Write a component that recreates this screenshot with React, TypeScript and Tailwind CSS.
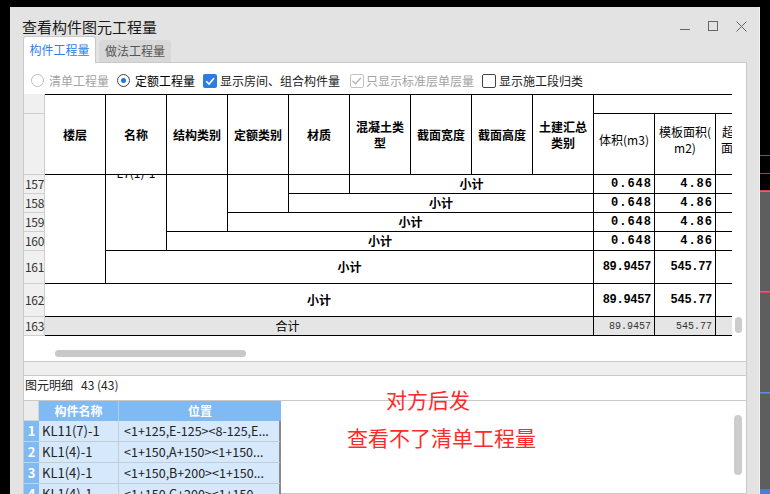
import React from "react";

const ui = "font-['Noto_Sans_CJK_SC','Microsoft_YaHei',sans-serif]";
const mono = "font-['Liberation_Mono',monospace]";

const rowHead = "bg-[#f0f0f0] border-r border-b border-[#cfcfcf] flex items-center pl-[1px] text-[12px] tracking-[-0.3px] text-[#333] whitespace-nowrap";
const cell = "border-r border-b border-black";
const head = "row-span-2 border-t border-r border-b border-black flex items-center justify-center text-center font-bold leading-[16px] px-[4px]";
const sub = "border-r border-b border-black flex items-center justify-center text-center leading-[16px] pb-[8px]";
const numBase = `border-r border-b border-black flex items-center justify-end ${mono} font-bold text-[12px]`;

const subtotals = [
  { n: "157", span: "col-span-4", v: "0.648", a: "4.86", fit: "tracking-[1px] pr-[2px]" },
  { n: "158", span: "col-span-5", v: "0.648", a: "4.86", fit: "tracking-[1px] pr-[2px]" },
  { n: "159", span: "col-span-6", v: "0.648", a: "4.86", fit: "tracking-[1px] pr-[2px]" },
  { n: "160", span: "col-span-7", v: "0.648", a: "4.86", fit: "tracking-[1px] pr-[2px]" },
  { n: "161", span: "col-span-8", v: "89.9457", a: "545.77", fit: "tracking-[-0.3px] pr-[3px]" },
  { n: "162", span: "col-span-9", v: "89.9457", a: "545.77", fit: "tracking-[-0.3px] pr-[3px]" },
];

const details = [
  { id: "1", name: "KL11(7)-1", pos: "<1+125,E-125><8-125,E..." },
  { id: "2", name: "KL1(4)-1", pos: "<1+150,A+150><1+150..." },
  { id: "3", name: "KL1(4)-1", pos: "<1+150,B+200><1+150..." },
  { id: "4", name: "KL1(4)-1", pos: "<1+150,C+200><1+150..." },
];

function Radio({ on, dim }: { on?: boolean; dim?: boolean }) {
  return (
    <span className={`w-[13px] h-[13px] shrink-0 rounded-full border bg-white flex items-center justify-center ${dim ? "border-[#bdbdbd]" : "border-[#444]"}`}>
      {on && <span className="w-[5px] h-[5px] rounded-full bg-[#1f78e0]" />}
    </span>
  );
}

function Check({ on, dim }: { on?: boolean; dim?: boolean }) {
  if (on && !dim) {
    return (
      <span className="w-[14px] h-[14px] shrink-0 rounded-[2px] bg-[#2b7de1] flex items-center justify-center">
        <svg width="12" height="12" viewBox="0 0 12 12">
          <path d="M2.2 6.2 L5 9 L10 3.2" fill="none" stroke="white" strokeWidth="1.6" />
        </svg>
      </span>
    );
  }
  return (
    <span className={`w-[14px] h-[14px] shrink-0 rounded-[2px] border bg-white flex items-center justify-center ${dim ? "border-[#c2c2c2]" : "border-[#444]"}`}>
      {on && (
        <svg width="12" height="12" viewBox="0 0 12 12">
          <path d="M1.5 5.8 L4.5 8.8 L10 2.8" fill="none" stroke="#b5b5b5" strokeWidth="1.4" />
        </svg>
      )}
    </span>
  );
}

function SideStrip() {
  return (
    <div className="w-[10px] shrink-0 flex flex-col bg-black">
      <div className="h-[148px]" />
      <div className="h-px bg-[#2f7d32]" />
      <div className="h-[17px]" />
      <div className="h-px bg-[#2f7d32]" />
      <div className="h-[16px]" />
      <div className="h-px bg-[#d04a5a]" />
      <div className="h-px bg-[#5b8ee0]" />
      <div className="h-[99px] bg-[#5e5e5e]" />
      <div className="h-px bg-[#5b8ee0]" />
      <div className="h-px bg-[#d04a5a]" />
      <div className="h-[99px] bg-[#5e5e5e]" />
      <div className="h-px bg-[#5b8ee0]" />
      <div className="h-px bg-[#d04a5a]" />
      <div className="h-[95px] bg-[#5e5e5e]" />
      <div className="flex-1 bg-[#4a7bd6]" />
    </div>
  );
}

function QuantityTable() {
  return (
    <div className="grid w-[753px] grid-cols-[21px_repeat(12,61px)] grid-rows-[20px_61px_19px_19px_19px_19px_33px_33px_19px] text-[12px] text-black">
      {/* header */}
      <div className={rowHead} />
      <div className={head}>楼层</div>
      <div className={head}>名称</div>
      <div className={head}>结构类别</div>
      <div className={head}>定额类别</div>
      <div className={head}>材质</div>
      <div className={head}>混凝土类<br />型</div>
      <div className={head}>截面宽度</div>
      <div className={head}>截面高度</div>
      <div className={head}>土建汇总<br />类别</div>
      <div className="col-span-3 border-t border-r border-b border-black" />
      <div className={rowHead} />
      <div className={sub}>体积(m3)</div>
      <div className={sub}>模板面积(<br />m2)</div>
      <div className={sub}>超高模板<br />面积(m2)</div>

      {/* body */}
      {subtotals.map((r, i) => (
        <React.Fragment key={r.n}>
          <div className={rowHead}>{r.n}</div>
          {i === 0 && (
            <>
              <div className={`row-span-5 ${cell}`} />
              <div className={`row-span-4 ${cell} overflow-hidden`}>
                <div className="-mt-[9px] text-center leading-[14px] text-[12px]">L7(1)-1</div>
              </div>
              <div className={`row-span-3 ${cell}`} />
              <div className={`row-span-2 ${cell}`} />
              <div className={cell} />
            </>
          )}
          <div className={`${r.span} ${cell} flex items-center justify-center font-bold`}>小计</div>
          <div className={`${numBase} ${r.fit}`}>{r.v}</div>
          <div className={`${numBase} ${r.fit}`}>{r.a}</div>
          <div className={cell} />
        </React.Fragment>
      ))}
      <div className={rowHead}>163</div>
      <div className={`col-span-9 ${cell} bg-[#e5e5e5] flex items-center justify-center pr-[63px]`}>合计</div>
      <div className={`${cell} bg-[#e5e5e5] flex items-center justify-end pr-[3px] ${mono} text-[10px] text-[#333]`}>89.9457</div>
      <div className={`${cell} bg-[#e5e5e5] flex items-center justify-end pr-[3px] ${mono} text-[10px] text-[#333]`}>545.77</div>
      <div className={`${cell} bg-[#e5e5e5]`} />
    </div>
  );
}

function DetailGrid() {
  return (
    <div className="grid w-[257px] shrink-0 grid-cols-[15px_80px_162px] grid-rows-[20px_21px_21px_21px_21px] text-[12px]">
      <div className="bg-[#ececec] border-r border-b border-[#d4d4d4]" />
      <div className="bg-[#7fbaf3] border-r border-[#a8d0f8] text-white font-bold flex items-center justify-center">构件名称</div>
      <div className="bg-[#7fbaf3] text-white font-bold flex items-center justify-center">位置</div>
      {details.map((d) => (
        <React.Fragment key={d.id}>
          <div className="bg-[#7fbaf3] border-b border-[#b9d8f7] text-white font-bold text-[13px] flex items-center justify-center">{d.id}</div>
          <div className="bg-[#d6e8fb] border-r border-b border-[#c6ccd3] pl-[3px] text-[13px] text-[#222] flex items-center whitespace-nowrap overflow-hidden">{d.name}</div>
          <div className="bg-[#d6e8fb] border-b border-[#c6ccd3] border-r-2 border-r-[#8a8a8a] pl-[5px] text-[12.5px] text-[#222] flex items-center whitespace-nowrap overflow-hidden">{d.pos}</div>
        </React.Fragment>
      ))}
    </div>
  );
}

export default function App() {
  return (
    <div className={`relative w-[770px] h-[494px] overflow-hidden bg-black flex flex-col ${ui}`}>
      <div className="h-[7px] shrink-0" />
      <div className="flex flex-1 min-h-0">
        <div className="w-[10px] shrink-0" />
        <div className="w-[750px] shrink-0 bg-[#e3e3e3] border-r border-[#f4f4f4] flex flex-col">
          {/* title bar */}
          <div className="h-[29px] shrink-0 flex items-start justify-between pl-[12px] pr-[12px]">
            <div className="pt-[11px] text-[15px] leading-[18px] text-[#1a1a1a]">查看构件图元工程量</div>
            <div className="flex items-start pt-[14px]">
              <svg width="10" height="11">
                <line x1="0" y1="8.5" x2="10" y2="8.5" stroke="#666" />
              </svg>
              <svg width="10" height="10" className="ml-[18px]">
                <rect x="0.5" y="0.5" width="9" height="9" fill="none" stroke="#666" />
              </svg>
              <svg width="11" height="11" className="ml-[18px]">
                <path d="M0.5 0.5 L10.5 10.5 M10.5 0.5 L0.5 10.5" stroke="#666" />
              </svg>
            </div>
          </div>

          {/* tabs */}
          <div className="h-[26px] shrink-0 flex items-end pl-[13px] relative z-10">
            <div className="h-[27px] w-[73px] -mb-px bg-white border border-b-0 border-[#c9c9c9] rounded-t-[3px] flex items-center justify-center text-[12px] text-[#2a82e4]">构件工程量</div>
            <div className="h-[22px] w-[72px] ml-[3px] bg-[#d8d8d8] rounded-t-[3px] flex items-center justify-center text-[12px] text-[#555]">做法工程量</div>
          </div>

          <div className="ml-[13px] w-[724px] flex-1 min-h-0 bg-white border border-[#c9c9c9] flex flex-col">
            {/* options */}
            <div className="h-[31px] shrink-0 flex items-center pt-[4px] pl-[7px] text-[12px] leading-[16px] text-[#222]">
              <Radio dim />
              <span className="ml-[5px] text-[#a3a3a3]">清单工程量</span>
              <span className="ml-[8px] flex"><Radio on /></span>
              <span className="ml-[5px] text-black">定额工程量</span>
              <span className="ml-[8px] flex"><Check on /></span>
              <span className="ml-[3px]">显示房间、组合构件量</span>
              <span className="ml-[10px] flex"><Check on dim /></span>
              <span className="ml-[2px] text-[#a3a3a3]">只显示标准层单层量</span>
              <span className="ml-[8px] flex"><Check /></span>
              <span className="ml-[3px]">显示施工段归类</span>
            </div>

            {/* table */}
            <div className="h-[242px] shrink-0 flex">
              <div className="w-[708px] shrink-0 overflow-hidden">
                <QuantityTable />
              </div>
              <div className="flex-1">
                <div className="ml-[3px] mt-[223px] w-[7px] h-[16px] rounded-full bg-[#cdcdcd]" />
              </div>
            </div>
            <div className="h-[25px] shrink-0 pl-[31px] pt-[14px]">
              <div className="w-[191px] h-[7px] rounded-full bg-[#c8c8c8]" />
            </div>

            {/* splitter */}
            <div className="h-[15px] shrink-0 bg-[#efefef] border-y border-[#c9c9c9]" />

            {/* detail */}
            <div className="h-[25px] shrink-0 border-b border-[#c9c9c9] flex items-start pl-[1px] text-[12px] leading-[18px] text-[#222]">
              <span>图元明细</span>
              <span className="ml-[8px]">43 (43)</span>
            </div>
            <div className="flex flex-1 min-h-0">
              <DetailGrid />
              <div className="flex-1" />
              <div className="w-[14px] shrink-0">
                <div className="ml-[2px] mt-[14px] w-[8px] h-[60px] rounded-full bg-[#cdcdcd]" />
              </div>
            </div>
          </div>
        </div>
        <SideStrip />
      </div>

      <div className="absolute left-[386px] top-[389px] text-[21px] leading-none text-[#ff2a2a] whitespace-nowrap">对方后发</div>
      <div className="absolute left-[347px] top-[427px] text-[21px] leading-none text-[#ff2a2a] whitespace-nowrap">查看不了清单工程量</div>
    </div>
  );
}
